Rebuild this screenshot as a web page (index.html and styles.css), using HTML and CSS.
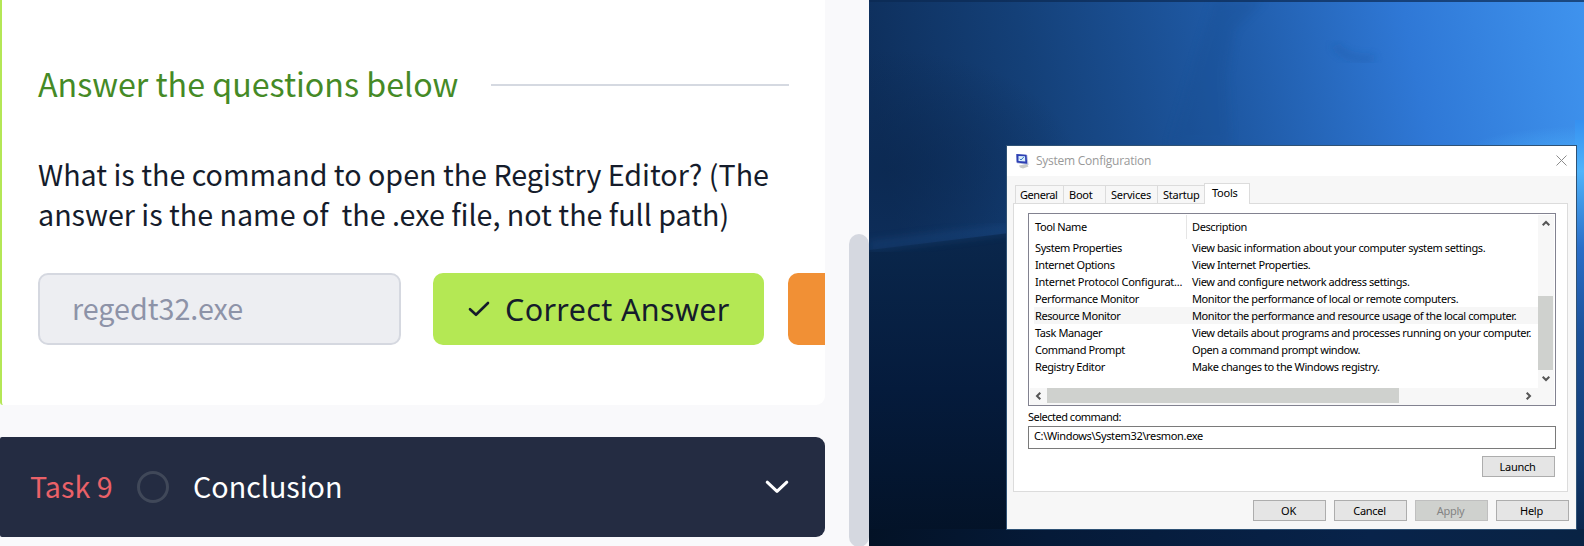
FILE: index.html
```html
<!DOCTYPE html>
<html lang="en">
<head>
<meta charset="utf-8">
<title>Windows Fundamentals</title>
<link rel="stylesheet" href="styles.css">
</head>
<body>
<div class="screen">
  <main class="room">
    <section class="card">
      <div class="heading"><h2>Answer the questions below</h2><span class="rule"></span></div>
      <p class="question">What is the command to open the Registry Editor? (The<br>answer is the name of&nbsp; the .exe file, not the full path)</p>
      <div class="answer">
        <div class="field">regedt32.exe</div>
        <div class="correct">
          <svg width="22" height="16" viewBox="0 0 22 16"><path d="M2 8.2 8 13.8 20 2"/></svg>
          <span>Correct Answer</span>
        </div>
        <div class="hint"></div>
      </div>
    </section>
    <section class="task">
      <span class="number">Task 9</span>
      <span class="ring"></span>
      <span class="name">Conclusion</span>
      <svg width="24" height="14" viewBox="0 0 24 14"><path d="M2.2 2.2 12 11.4 21.8 2.2"/></svg>
    </section>
  </main>
  <aside class="gutter"><div class="thumb"></div></aside>
  <div class="desktop">
    <svg class="wallpaper" width="715" height="546" viewBox="0 0 715 546" preserveAspectRatio="none">
      <defs>
        <linearGradient id="sky" x1="0" y1="0.15" x2="1" y2="0">
          <stop offset="0" stop-color="#0e2f5c"/><stop offset=".22" stop-color="#144078"/>
          <stop offset=".5" stop-color="#1f5aa6"/><stop offset=".75" stop-color="#2f78d6"/><stop offset="1" stop-color="#3f93ee"/>
        </linearGradient>
        <radialGradient id="shade"><stop offset="0" stop-color="#0b2850" stop-opacity=".75"/><stop offset="1" stop-color="#0b2850" stop-opacity="0"/></radialGradient>
        <linearGradient id="floor" x1="0" y1="0" x2="0" y2="1">
          <stop offset="0" stop-color="#0a274c"/><stop offset=".5" stop-color="#051b3c"/><stop offset="1" stop-color="#031226"/>
        </linearGradient>
        <linearGradient id="edge" x1="0" y1="0" x2="0" y2="1">
          <stop offset="0" stop-color="#3590f0"/><stop offset=".12" stop-color="#4fb4fb"/><stop offset=".3" stop-color="#2a6ec8"/>
          <stop offset=".5" stop-color="#1c529a"/><stop offset=".8" stop-color="#113a70"/><stop offset="1" stop-color="#0a2346"/>
        </linearGradient>
        <linearGradient id="base" x1="0" y1="0" x2="1" y2="0">
          <stop offset="0" stop-color="#031226"/><stop offset=".25" stop-color="#051a38"/><stop offset=".7" stop-color="#08234a"/><stop offset="1" stop-color="#092344"/>
        </linearGradient>
        <radialGradient id="glow"><stop offset="0" stop-color="#4bb0fb" stop-opacity=".8"/><stop offset="1" stop-color="#4bb0fb" stop-opacity="0"/></radialGradient>
        <filter id="fine" x="-30%" y="-30%" width="160%" height="160%"><feGaussianBlur stdDeviation="4"/></filter>
      </defs>
      <rect width="715" height="546" fill="url(#sky)"/>
      <ellipse cx="20" cy="170" rx="190" ry="120" fill="url(#shade)"/>
      <ellipse cx="715" cy="160" rx="130" ry="34" fill="url(#glow)"/>
      <path d="M395 0 365 30 358 75 362 145 300 145 345 0Z" fill="#174b8e" opacity=".25" filter="url(#fine)"/>
      <path d="M465 45Q480 62 505 58" fill="none" stroke="#1d56a0" stroke-width="4" opacity=".6" filter="url(#fine)"/>
      <path d="M0 250 140 233V546H0Z" fill="url(#floor)"/>
      <path d="M0 246 140 229" stroke="#1b4d88" stroke-width="9" opacity=".4" filter="url(#fine)"/>
      <rect x="706" y="120" width="9" height="426" fill="url(#edge)"/>
      <rect y="529" width="715" height="17" fill="url(#base)"/>
      <rect width="715" height="2" fill="#0c2a52" opacity=".7"/>
    </svg>
    <div class="dialog">
      <header class="titlebar">
        <svg class="app" width="16" height="16" viewBox="0 0 16 16">
          <path d="M4 12.5 12 11l1.500 2.500L8 15.600 5 14.500Z" fill="#c9cbc8"/>
          <path d="M1 1 12.300 2 13.600 12 2 10.300Z" fill="#b9c2dd"/>
          <path d="M1.400 1 11.500 1.800 12.200 10.800 1.600 9.600Z" fill="#2d3fb4"/>
          <path d="M3.500 3 10 3.300 10.300 8.500 3.500 8Z" fill="#d8eefb"/>
          <path d="M4.800 5.800 6 7 9 3.800" fill="none" stroke="#3b78c8"/>
        </svg>
        <span class="title">System Configuration</span>
        <svg class="close" width="11" height="11" viewBox="0 0 11 11"><path d="M.5.5 10.500 10.500M10.500.5.5 10.500"/></svg>
      </header>
      <nav class="tabs">
        <span class="tab general">General</span><span class="tab boot">Boot</span><span class="tab services">Services</span><span class="tab startup">Startup</span><span class="tab tools">Tools</span>
      </nav>
      <section class="page">
        <div class="list">
          <div class="rows">
            <div class="row head"><span class="tool">Tool Name</span><span>Description</span></div>
            <div class="row"><span>System Properties</span><span>View basic information about your computer system settings.</span></div>
            <div class="row"><span>Internet Options</span><span>View Internet Properties.</span></div>
            <div class="row"><span class="cut">Internet Protocol Configurat...</span><span>View and configure network address settings.</span></div>
            <div class="row"><span>Performance Monitor</span><span>Monitor the performance of local or remote computers.</span></div>
            <div class="row active"><span>Resource Monitor</span><span>Monitor the performance and resource usage of the local computer.</span></div>
            <div class="row"><span>Task Manager</span><span>View details about programs and processes running on your computer.</span></div>
            <div class="row"><span>Command Prompt</span><span>Open a command prompt window.</span></div>
            <div class="row"><span>Registry Editor</span><span>Make changes to the Windows registry.</span></div>
          </div>
          <div class="vbar">
            <svg width="8" height="7" viewBox="0 0 8 7"><path d="M.7 5.300 4 2 7.300 5.300"/></svg>
            <div class="vthumb"></div>
            <svg width="8" height="7" viewBox="0 0 8 7"><path d="M.7 1.700 4 5 7.300 1.700"/></svg>
          </div>
          <div class="hbar">
            <svg width="7" height="8" viewBox="0 0 7 8"><path d="M5.300.7 2 4 5.300 7.300"/></svg>
            <div class="hthumb"></div>
            <svg width="7" height="8" viewBox="0 0 7 8"><path d="M1.700.7 5 4 1.700 7.300"/></svg>
          </div>
        </div>
        <label class="label">Selected command:</label>
        <div class="command">C:\Windows\System32\resmon.exe</div>
        <div class="btn launch">Launch</div>
      </section>
      <footer class="buttons">
        <div class="btn">OK</div><div class="btn">Cancel</div><div class="btn disabled">Apply</div><div class="btn">Help</div>
      </footer>
    </div>
  </div>
</div>
</body>
</html>
```
FILE: styles.css
```css
* { box-sizing: border-box; }
body { margin: 0; }
.screen { display: flex; width: 1584px; height: 546px; overflow: hidden; background: #f9f9fb; font-family: "Noto Sans CJK SC", "Noto Sans", sans-serif; }
.room { width: 825px; flex: none; }
.card { height: 405px; padding: 60px 0 0 36px; background: #fff; border-left: 2px solid #b4e756; border-radius: 0 0 9px 3px; overflow: hidden; }
.heading { display: flex; align-items: center; height: 50px; }
.heading h2 { margin: 0 0 4px; width: 453px; font-size: 32.2px; font-weight: 400; line-height: 46px; color: #458a26; white-space: nowrap; }
.rule { width: 298px; height: 2px; background: #d5d9e1; }
.question { margin: 44px 0 0; font-size: 28.66px; line-height: 40px; color: #151c2b; white-space: nowrap; }
.answer { display: flex; margin-top: 39px; height: 72px; }
.field { flex: none; width: 363px; padding-left: 32px; border: 2px solid #d5d8e0; border-radius: 10px; background: #edeef2; color: #8d93a8; font-size: 28.66px; line-height: 66px; }
.correct { flex: none; display: flex; align-items: center; gap: 15px; width: 331px; margin-left: 32px; padding-left: 35px; border-radius: 10px; background: #b4e854; color: #151c2b; font: 30.5px/72px "Noto Sans", sans-serif; letter-spacing: .35px; white-space: nowrap; }
.correct svg, .task svg { fill: none; stroke: #151c2b; stroke-width: 2.6; stroke-linecap: round; stroke-linejoin: round; }
.hint { flex: none; width: 80px; margin-left: 24px; border-radius: 10px; background: #f19035; }
.task { display: flex; align-items: center; height: 100px; margin-top: 32px; padding: 0 36px 0 30px; background: #242c42; border-radius: 2px 9px 9px 2px; color: #fff; font-size: 28.66px; line-height: 40px; }
.number, .name { margin-bottom: 2px; }
.number { width: 107px; color: #ea6168; }
.ring { width: 32px; height: 32px; margin-right: 24px; border: 3px solid #404859; border-radius: 50%; }
.task svg { margin-left: auto; stroke: #fff; stroke-width: 3; }
.gutter { width: 44px; flex: none; padding: 234px 0 0 24px; }
.thumb { width: 20px; height: 313px; border-radius: 10px; background: #d5d8e0; }

.desktop { position: relative; width: 715px; height: 546px; padding: 145px 0 0 137px; }
.wallpaper { position: absolute; left: 0; top: 0; }
.dialog { position: relative; width: 571px; height: 385px; border: 1px solid #2f5275; background: #f7f7f7; color: #000; font: 11px/17px "Noto Sans", sans-serif; letter-spacing: -.4px; }
.dialog span, .label, .command, .btn { white-space: nowrap; }
.titlebar { display: flex; align-items: center; height: 30px; padding: 0 9px 0 8px; background: #fff; }
.title { margin-left: 5px; font: 12px/28px "Open Sans", sans-serif; letter-spacing: -.25px; color: #999; }
.close { margin-left: auto; margin-bottom: 2px; fill: none; stroke: #8c8c8c; }
.tabs { display: flex; align-items: flex-end; height: 28px; padding-left: 8px; position: relative; margin-bottom: -1px; }
.tab { height: 19px; border: 1px solid #dcdcdc; border-right: 0; padding-left: 5px; line-height: 18px; letter-spacing: -.25px; }
.general { width: 48px; padding-left: 4px; letter-spacing: -.45px; }
.boot { width: 42px; }
.services { width: 52px; }
.startup { width: 47px; }
.tools { width: 46px; height: 21px; padding-left: 7px; border-right: 1px solid #dcdcdc; border-bottom: 0; background: #fff; }
.page { width: 555px; height: 289px; margin-left: 6px; padding: 9px 0 0 14px; border: 1px solid #dcdcdc; background: #fff; }
.list { display: grid; grid-template: 173px 17px / 508px 16px; width: 528px; height: 193px; padding: 1px; border: 1px solid #828290; }
.rows { padding-left: 4px; }
.row { display: grid; grid-template-columns: 153px 1fr; width: 504px; height: 17px; }
.row span { padding-left: 1px; }
.row span + span { padding-left: 5px; }
.row .cut { letter-spacing: -.25px; }
.head { height: 24px; line-height: 24px; }
.head .tool { border-right: 1px solid #e5e5e5; }
.active { background: #f6f6f6; }
.vbar { display: flex; flex-direction: column; align-items: center; padding: 5px 0; background: #f7f7f7; }
.dialog .vbar svg, .dialog .hbar svg { flex: none; fill: none; stroke: #555; stroke-width: 2; }
.vthumb { width: 15px; height: 74px; margin: 69px 1px 5px 0; background: #cfd1ce; }
.hbar { grid-column: 1 / 3; display: flex; align-items: center; padding: 0 0 2px 5px; background: #f7f7f7; }
.hthumb { width: 352px; height: 15px; margin: 0 126px 0 5px; background: #cfd1ce; }
.label { display: block; height: 20px; line-height: 21px; letter-spacing: -.5px; }
.command { width: 528px; height: 23px; padding-left: 5px; border: 1px solid #7a7a7a; line-height: 18px; letter-spacing: -.35px; }
.btn { width: 73px; height: 21px; padding-right: 2px; border: 1px solid #adadad; background: #e5e5e5; text-align: center; line-height: 20px; letter-spacing: -.3px; }
.launch { margin: 7px 0 0 454px; }
.buttons { display: flex; gap: 8px; padding: 8px 0 0 246px; }
.disabled { border-color: #bfbfbf; background: #cfd1ce; color: #838383; }
```
